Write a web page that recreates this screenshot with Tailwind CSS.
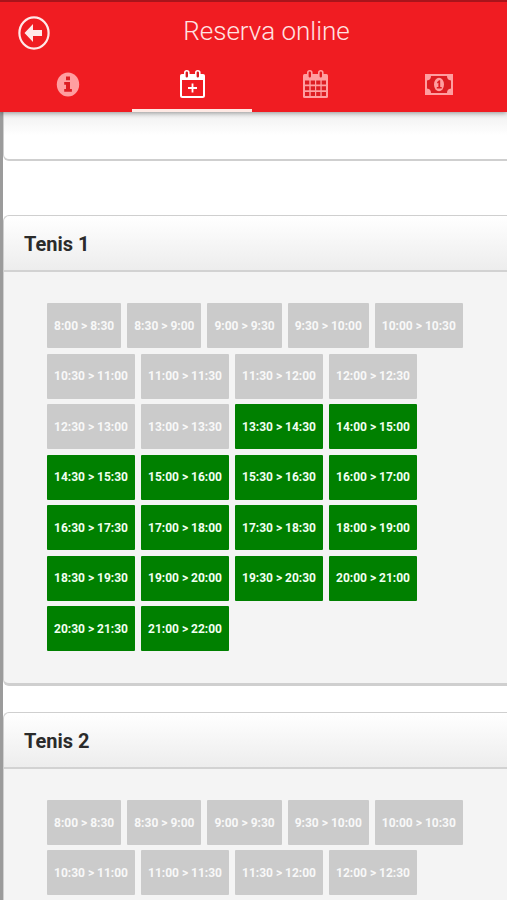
<!DOCTYPE html>
<html lang="es">
<head>
    <meta charset="UTF-8" />
    <meta name="viewport" content="width=device-width, initial-scale=1.0" />
    <title>Reserva online</title>
    <script src="https://cdn.jsdelivr.net/npm/@tailwindcss/browser@4"></script>
</head>
<body class="h-screen overflow-hidden flex flex-col bg-white font-['Roboto',sans-serif]">
    <!-- Header with the tabs -->
    <header class="relative z-10 shrink-0 border-t-2 border-[#a9141b] bg-[#f01c22] shadow-[0_1px_5px_rgba(0,0,0,0.4)]">
        <div class="grid grid-cols-[32px_1fr] items-center pl-[18px] pr-6 pt-2.5">
            <button type="button" aria-label="Volver" class="mt-1 text-[#ffe9e9]">
                <svg class="w-8 h-[34px]" viewBox="0 0 32 34" fill="none">
                    <ellipse cx="16" cy="17" rx="14.6" ry="15.6" stroke="currentColor" stroke-width="2.2" />
                    <path d="M6.5 17 15 8V14h9v6H15v6z" fill="currentColor" />
                </svg>
            </button>
            <h1 class="text-center text-[26px] leading-[34px] font-light text-[#ffe3e3]">Reserva online</h1>
        </div>
        <nav class="mt-2 grid grid-cols-4 px-1.5 text-[#ff9ea0]">
            <a href="#info" aria-label="Información" class="mx-0.5 h-[54px] flex justify-center pt-3 border-b-3 border-transparent">
                <svg class="w-6 h-7" viewBox="0 0 24 28">
                    <ellipse cx="12" cy="14.5" rx="11.2" ry="12" fill="currentColor" />
                    <path d="M10 6.5h4v3.7h-4zM8.2 12H14v7h1.9v2.8H8.2V19H10v-4.2H8.2z" fill="#dd1d23" />
                </svg>
            </a>
            <a href="#reservar" aria-label="Reservar" aria-current="page" class="mx-0.5 h-[54px] flex justify-center pt-3 border-b-3 border-[#ffe9e4] text-white">
                <svg class="w-7 h-7" viewBox="0 0 28 28" fill="none">
                    <rect x="3" y="5" width="23" height="22" rx="1.5" stroke="currentColor" stroke-width="2" />
                    <path d="M2.5 4.5h24V10h-24z" fill="currentColor" />
                    <rect x="6.8" y="0.8" width="4" height="7.4" rx="2" fill="#d91a20" stroke="currentColor" stroke-width="1.6" />
                    <rect x="17.8" y="0.8" width="4" height="7.4" rx="2" fill="#d91a20" stroke="currentColor" stroke-width="1.6" />
                    <path d="M14.5 13.5v9M10 18h9" stroke="currentColor" stroke-width="1.8" />
                </svg>
            </a>
            <a href="#calendario" aria-label="Calendario" class="mx-0.5 h-[54px] flex justify-center pt-3 border-b-3 border-transparent">
                <svg class="w-7 h-7" viewBox="0 0 28 28" fill="none">
                    <rect x="2" y="4" width="25" height="24" rx="1.5" fill="currentColor" />
                    <rect x="6.8" y="0.8" width="4" height="7.4" rx="2" fill="#e01b21" stroke="currentColor" stroke-width="1.6" />
                    <rect x="17.8" y="0.8" width="4" height="7.4" rx="2" fill="#e01b21" stroke="currentColor" stroke-width="1.6" />
                    <path d="M4 10.5h4.3v4H4zM9.7 10.5H14v4H9.7zM15.2 10.5h4.2v4h-4.2zM20.7 10.5H25v4h-4.3zM4 16.2h4.3v4H4zM9.7 16.2H14v4H9.7zM15.2 16.2h4.2v4h-4.2zM20.7 16.2H25v4h-4.3zM4 22h4.3v4H4zM9.7 22H14v4H9.7zM15.2 22h4.2v4h-4.2zM20.7 22H25v4h-4.3z" fill="#dd1d23" />
                </svg>
            </a>
            <a href="#pagos" aria-label="Pagos" class="mx-0.5 h-[54px] flex justify-center pt-3 border-b-3 border-transparent">
                <svg class="w-[30px] h-7" viewBox="0 0 30 28" fill="none">
                    <path d="M1 4h28v21H1z" fill="currentColor" />
                    <path d="M7 6h16a4.5 4.5 0 0 0 4 4.5v8a4.5 4.5 0 0 0-4 4.5H7a4.5 4.5 0 0 0-4-4.5v-8A4.5 4.5 0 0 0 7 6z" fill="#dd1d23" />
                    <ellipse cx="15" cy="14.5" rx="5" ry="6.7" fill="currentColor" />
                    <path d="M13 12.2 15 10.3h1.2v6.6h1.5v1.6h-4.9v-1.6h1.6v-4.2l-.9.7z" fill="#dd1d23" />
                </svg>
            </a>
        </nav>
    </header>

    <main class="grow min-h-0 overflow-hidden border-l-3 border-[#9b9b9b]">
        <div class="h-[49px] rounded-bl-md border-l border-b-2 border-[#cfcfcf] bg-linear-to-b from-[#f0f0f0] to-white to-50%"></div>

        <section class="mt-[54px] rounded-l-md border border-r-0 border-b-3 border-[#cfcfcf] bg-[#f4f4f4]">
            <h2 class="rounded-tl-md border-b-2 border-[#d2d2d2] bg-linear-to-b from-white to-[#ededed] px-5 pt-3.5 pb-3 text-[20px] leading-7 font-bold text-[#2b2b2b]">Tenis 1</h2>
            <div class="pl-[43px] pr-8 pt-[31px] pb-8">
                <div class="min-h-[348px] flex flex-wrap content-between gap-x-1.5 [&>button]:h-[45px] [&>button]:px-[7px] [&>button]:rounded-[1px] [&>button]:bg-[#008000] [&>button]:text-[12px] [&>button]:font-bold [&>button]:text-[#f0fff0] [&>button:disabled]:bg-[#cbcbcb] [&>button:disabled]:text-[#f8f8f8]">
                    <button type="button" disabled>8:00 &gt; 8:30</button>
                    <button type="button" disabled>8:30 &gt; 9:00</button>
                    <button type="button" disabled>9:00 &gt; 9:30</button>
                    <button type="button" disabled>9:30 &gt; 10:00</button>
                    <button type="button" disabled>10:00 &gt; 10:30</button>
                    <button type="button" disabled>10:30 &gt; 11:00</button>
                    <button type="button" disabled>11:00 &gt; 11:30</button>
                    <button type="button" disabled>11:30 &gt; 12:00</button>
                    <button type="button" disabled>12:00 &gt; 12:30</button>
                    <button type="button" disabled>12:30 &gt; 13:00</button>
                    <button type="button" disabled>13:00 &gt; 13:30</button>
                    <button type="button">13:30 &gt; 14:30</button>
                    <button type="button">14:00 &gt; 15:00</button>
                    <button type="button">14:30 &gt; 15:30</button>
                    <button type="button">15:00 &gt; 16:00</button>
                    <button type="button">15:30 &gt; 16:30</button>
                    <button type="button">16:00 &gt; 17:00</button>
                    <button type="button">16:30 &gt; 17:30</button>
                    <button type="button">17:00 &gt; 18:00</button>
                    <button type="button">17:30 &gt; 18:30</button>
                    <button type="button">18:00 &gt; 19:00</button>
                    <button type="button">18:30 &gt; 19:30</button>
                    <button type="button">19:00 &gt; 20:00</button>
                    <button type="button">19:30 &gt; 20:30</button>
                    <button type="button">20:00 &gt; 21:00</button>
                    <button type="button">20:30 &gt; 21:30</button>
                    <button type="button">21:00 &gt; 22:00</button>
                </div>
            </div>
        </section>

        <section class="mt-[26px] rounded-l-md border border-r-0 border-b-3 border-[#cfcfcf] bg-[#f4f4f4]">
            <h2 class="rounded-tl-md border-b-2 border-[#d2d2d2] bg-linear-to-b from-white to-[#ededed] px-5 pt-3.5 pb-3 text-[20px] leading-7 font-bold text-[#2b2b2b]">Tenis 2</h2>
            <div class="pl-[43px] pr-8 pt-[31px] pb-8">
                <div class="flex flex-wrap gap-x-1.5 gap-y-[5px] [&>button]:h-[45px] [&>button]:px-[7px] [&>button]:rounded-[1px] [&>button]:bg-[#cbcbcb] [&>button]:text-[12px] [&>button]:font-bold [&>button]:text-[#f8f8f8]">
                    <button type="button" disabled>8:00 &gt; 8:30</button>
                    <button type="button" disabled>8:30 &gt; 9:00</button>
                    <button type="button" disabled>9:00 &gt; 9:30</button>
                    <button type="button" disabled>9:30 &gt; 10:00</button>
                    <button type="button" disabled>10:00 &gt; 10:30</button>
                    <button type="button" disabled>10:30 &gt; 11:00</button>
                    <button type="button" disabled>11:00 &gt; 11:30</button>
                    <button type="button" disabled>11:30 &gt; 12:00</button>
                    <button type="button" disabled>12:00 &gt; 12:30</button>
                </div>
            </div>
        </section>
    </main>
</body>
</html>
